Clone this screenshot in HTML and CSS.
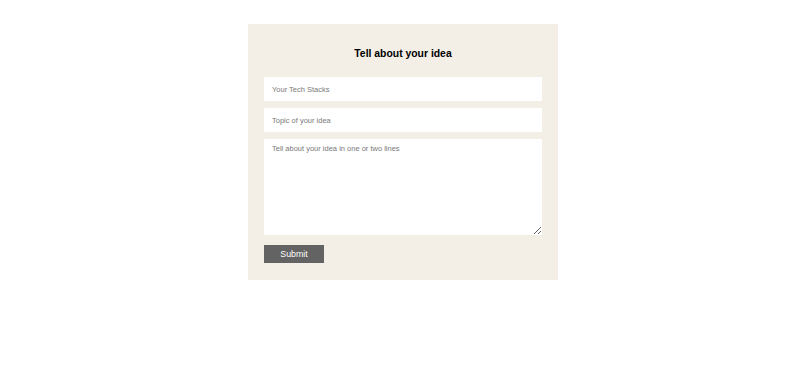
FILE: index.html
```html
<!DOCTYPE html>
<html lang="en">
<head>
    <meta charset="UTF-8">
    <meta name="viewport" content="width=device-width, initial-scale=1.0">
    <title>Share your idea</title>
    <link rel="stylesheet" href="styles.css">
</head>
<body>
    <div class="idea-form">
        <h3 class="title">Tell about your idea</h3>
        <form class="fields">
            <input type="text" class="field" placeholder="Your Tech Stacks">
            <input type="text" class="field" placeholder="Topic of your idea">
            <textarea class="field field-area" placeholder="Tell about your idea in one or two lines"></textarea>
            <button type="submit" class="submit">Submit</button>
        </form>
    </div>
</body>
</html>
```

FILE: styles.css
```css
body {
    font-family: "Liberation Sans", Arial, sans-serif;
    margin: 0;
    padding: 0;
    background-color: #fff;
    color: #000;
}

.idea-form {
    width: 310px;
    box-sizing: border-box;
    margin: 24px auto 0;
    padding: 16px 16px 17px;
    background-color: #f3eee6;
}

.title {
    font-size: 10.4px;
    line-height: 12px;
    font-weight: bold;
    text-align: center;
    margin: 8px 0 17px;
}

.fields {
    display: flex;
    flex-direction: column;
    gap: 7px;
    margin: 0;
}

.field {
    width: 100%;
    height: 24px;
    box-sizing: border-box;
    border: none;
    outline: none;
    padding: 0 8px;
    font-family: inherit;
    font-size: 7.5px;
    background-color: #fff;
}

.field::placeholder {
    color: #7a7a7a;
}

.field-area {
    height: 96px;
    padding: 5px 8px;
    resize: vertical;
}

.submit {
    align-self: flex-start;
    width: 60px;
    height: 18px;
    margin-top: 3px;
    border: none;
    padding: 0;
    background-color: #636363;
    color: #fff;
    font-family: inherit;
    font-size: 8.8px;
    cursor: pointer;
}
```
